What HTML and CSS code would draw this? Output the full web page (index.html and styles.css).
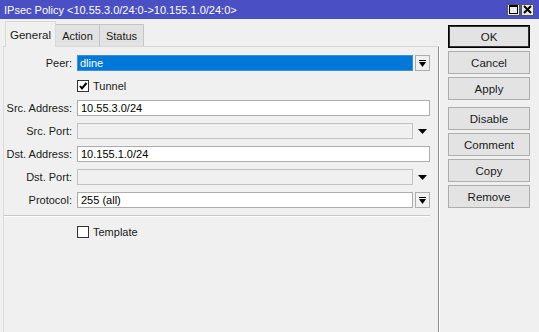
FILE: index.html
```html
<!doctype html>
<html>
<head>
<meta charset="UTF-8">
<title>IPsec Policy</title>
<link rel="stylesheet" href="styles.css">
</head>
<body>
  <!--title bar-->
  <div class="titlebar">
    <span class="title">IPsec Policy &lt;10.55.3.0/24:0-&gt;10.155.1.0/24:0&gt;</span>
    <div class="winbtns">
      <span class="winbtn"><svg width="9" height="9" viewBox="0 0 9 9"><rect x="0.5" y="0.5" width="8" height="8" fill="none" stroke="#000"/><rect x="0" y="0" width="9" height="2" fill="#000"/></svg></span>
      <span class="winbtn"><svg width="9" height="9" viewBox="0 0 9 9"><path d="M1 1 L8 8 M8 1 L1 8" stroke="#000" stroke-width="2"/></svg></span>
    </div>
  </div>
  <div class="content">
    <div class="left">
      <!--tabs-->
      <div class="tabs">
        <div class="tab active">General</div>
        <div class="tab">Action</div>
        <div class="tab">Status</div>
      </div>
      <div class="panel">
        <div class="form">
          <label class="lbl">Peer:</label>
          <div class="field-row">
            <div class="field selected">dline</div>
            <span class="ddbtn"><svg width="7" height="7" viewBox="0 0 7 7"><rect x="0" y="0" width="7" height="1" fill="#000"/><path d="M0 2 H7 L3.5 7 Z" fill="#000"/></svg></span>
          </div>

          <span></span>
          <div class="check-row"><span class="checkbox"><svg width="10" height="10" viewBox="0 0 10 10"><path d="M2 5 L4 7.5 L8.5 2" fill="none" stroke="#000" stroke-width="2"/></svg></span>Tunnel</div>

          <label class="lbl">Src. Address:</label>
          <div class="field">10.55.3.0/24</div>

          <label class="lbl">Src. Port:</label>
          <div class="field-row">
            <div class="field disabled"></div>
            <span class="arrow"><svg width="9" height="5" viewBox="0 0 9 5"><path d="M0 0 H9 L4.5 5 Z" fill="#000"/></svg></span>
          </div>

          <label class="lbl">Dst. Address:</label>
          <div class="field">10.155.1.0/24</div>

          <label class="lbl">Dst. Port:</label>
          <div class="field-row">
            <div class="field disabled"></div>
            <span class="arrow"><svg width="9" height="5" viewBox="0 0 9 5"><path d="M0 0 H9 L4.5 5 Z" fill="#000"/></svg></span>
          </div>

          <label class="lbl">Protocol:</label>
          <div class="field-row">
            <div class="field">255 (all)</div>
            <span class="ddbtn"><svg width="7" height="7" viewBox="0 0 7 7"><rect x="0" y="0" width="7" height="1" fill="#000"/><path d="M0 2 H7 L3.5 7 Z" fill="#000"/></svg></span>
          </div>

          <div class="sep"></div>

          <span></span>
          <div class="check-row"><span class="checkbox"></span>Template</div>
        </div>
      </div>
    </div>
    <!--buttons-->
    <div class="actions">
      <div class="btn default">OK</div>
      <div class="btn">Cancel</div>
      <div class="btn">Apply</div>
      <div class="btn group">Disable</div>
      <div class="btn">Comment</div>
      <div class="btn">Copy</div>
      <div class="btn">Remove</div>
    </div>
  </div>
</body>
</html>
```
FILE: styles.css
```css
*{
	box-sizing: border-box;
}
html, body{
	width:100%;
	height:100%;
	overflow:hidden;
}
body{
	margin:0;
	padding:0;
	background:#f0f0f0;
	font-family:"Liberation Sans", Arial, sans-serif;
	font-size:11px;
	color:#1a1a1a;
}
.titlebar{
	height:19px;
	background:#4b4fc4;
	display:flex;
	align-items:center;
	justify-content:space-between;
	padding:0 5px 0 4px;
}
.title{
	color:#fff;
	font-size:11px;
}
.winbtns{
	display:flex;
	gap:1px;
}
.winbtn{
	width:13px;
	height:12px;
	background:#ececec;
	border:1px solid #555;
	display:flex;
	align-items:center;
	justify-content:center;
}
.content{
	display:flex;
	height:313px;
}
.left{
	margin-left:3px;
	width:436px;
	display:flex;
	flex-direction:column;
}
.tabs{
	height:27px;
	display:flex;
	align-items:flex-end;
	padding-left:2px;
}
.tab{
	width:44px;
	height:22px;
	display:flex;
	align-items:center;
	justify-content:center;
	background:#e2e2e2;
	border:1px solid #c4c4c4;
	border-bottom:0;
	border-left:0;
}
.tab.active{
	width:51px;
	height:26px;
	background:#f0f0f0;
	border:1px solid #d9d9d9;
	border-bottom:0;
	margin-bottom:-1px;
	position:relative;
	font-size:11.5px;
}
.panel{
	flex:1;
	border-top:1px solid #d9d9d9;
	border-left:1px solid #dcdcdc;
	border-right:1px solid #8c8c8c;
	box-shadow:1px 0 0 #fff;
	padding:8px 8px 0 0;
}
.form{
	display:grid;
	grid-template-columns:68px 1fr;
	column-gap:5px;
	row-gap:7px;
}
.lbl{
	height:16px;
	display:flex;
	align-items:center;
	justify-content:flex-end;
	white-space:nowrap;
}
.field-row{
	display:flex;
	align-items:center;
	gap:2px;
}
.field{
	flex:1;
	height:16px;
	background:#fff;
	border:1px solid #acacac;
	padding:0 3px;
	display:flex;
	align-items:center;
	color:#000;
}
.field.selected{
	background:#0078d7;
	border-color:#3d8fd8;
	color:#fff;
	padding-left:2px;
}
.field.disabled{
	background:#f0f0f0;
	border-color:#c2c2c2;
}
.ddbtn{
	width:15px;
	height:16px;
	border:1px solid #adadad;
	background:#f0f0f0;
	display:flex;
	align-items:center;
	justify-content:center;
}
.arrow{
	width:15px;
	height:16px;
	display:flex;
	align-items:center;
	justify-content:center;
}
.check-row{
	height:15px;
	display:flex;
	align-items:center;
	gap:4px;
}
.checkbox{
	width:12px;
	height:12px;
	border:1px solid #333;
	background:#fff;
	display:flex;
	align-items:center;
	justify-content:center;
}
.sep{
	grid-column:1 / -1;
	height:2px;
	border-top:1px solid #c8c8c8;
	border-bottom:1px solid #fff;
}
.actions{
	margin-left:9px;
	width:82px;
	padding-top:6px;
	display:flex;
	flex-direction:column;
	gap:3px;
}
.btn{
	height:23px;
	background:#e3e3e3;
	border:1px solid #adadad;
	display:flex;
	align-items:center;
	justify-content:center;
	font-size:11.5px;
}
.btn.default{
	border:1px solid #000;
	box-shadow:inset 0 0 0 1px #333;
}
.btn.group{
	margin-top:4px;
}
```
